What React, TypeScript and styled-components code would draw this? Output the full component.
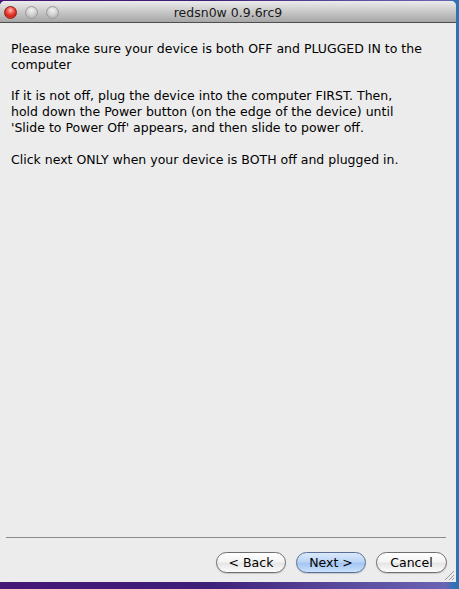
import React from "react";
import styled, { createGlobalStyle } from "styled-components";

const GlobalStyle = createGlobalStyle`
  html, body {
    margin: 0;
    padding: 0;
  }
  body {
    width: 459px;
    height: 589px;
    overflow: hidden;
    font-family: "DejaVu Sans", "Liberation Sans", sans-serif;
  }
`;

const paragraphs: string[][] = [
  ["Please make sure your device is both OFF and PLUGGED IN to the", "computer"],
  [
    "If it is not off, plug the device into the computer FIRST. Then,",
    "hold down the Power button (on the edge of the device) until",
    "'Slide to Power Off' appears, and then slide to power off.",
  ],
  ["Click next ONLY when your device is BOTH off and plugged in."],
];

const Desktop = styled.div`
  width: 459px;
  height: 589px;
  box-sizing: border-box;
  padding-top: 1px;
  background:
    linear-gradient(90deg, rgba(0, 0, 0, 0) 97%, #2f73b4 99%),
    linear-gradient(90deg, #451777 0%, #3d1f78 45%, #5a4a9e 75%, #6d66b6 100%);
  background-color: #1e2450;
`;

const Window = styled.div`
  position: relative;
  width: 456px;
  height: 581px;
  display: flex;
  flex-direction: column;
  background: #ececec;
  border-radius: 5px 5px 0 0;
  overflow: hidden;
`;

const TitleBar = styled.div`
  height: 21px;
  display: grid;
  grid-template-columns: 1fr auto 1fr;
  align-items: center;
  background: linear-gradient(#ebebeb, #c9c9c9 50%, #a6a6a6);
  border-bottom: 1px solid #4f4f4f;
`;

const Lights = styled.div`
  display: flex;
  gap: 8px;
  padding-left: 4px;
  padding-top: 1px;
`;

const Light = styled.span<{ $red?: boolean }>`
  width: 13px;
  height: 13px;
  box-sizing: border-box;
  border-radius: 50%;
  border: 1px solid ${(p) => (p.$red ? "#8c2118" : "#999999")};
  background: ${(p) =>
    p.$red
      ? "radial-gradient(circle at 50% 30%, #ffc4bc 0%, #f5554a 35%, #d0231a 65%, #f06a5c 100%)"
      : "radial-gradient(circle at 50% 30%, #f2f2f2 0%, #d4d4d4 45%, #b9b9b9 75%, #dddddd 100%)"};
`;

const Title = styled.div`
  font-size: 12.5px;
  color: #1a1a1a;
  padding-top: 1px;
`;

const Body = styled.div`
  flex: 1;
  padding: 18px 8px 0 11px;
  font-size: 12.5px;
  line-height: 15.8px;
  color: #000;
`;

const Para = styled.p`
  margin: 0 0 15.8px;
`;

const Separator = styled.div`
  height: 1px;
  margin: 0 10px 0 6px;
  background: #8a8a8a;
`;

const Footer = styled.div`
  display: flex;
  justify-content: flex-end;
  gap: 10px;
  padding: 14px 9px 9px;
`;

const Button = styled.button<{ $primary?: boolean; $w: number }>`
  width: ${(p) => p.$w}px;
  height: 21px;
  padding: 0;
  border-radius: 11px;
  font-family: "DejaVu Sans", "Liberation Sans", sans-serif;
  font-size: 12.5px;
  color: #000;
  border: 1px solid ${(p) => (p.$primary ? "#5a6f96" : "#6e6e6e")};
  background: ${(p) =>
    p.$primary
      ? "linear-gradient(#dbe9fb, #bcd6f6 45%, #a3c6f2 55%, #c9e1fb)"
      : "linear-gradient(#ffffff, #f4f4f4 45%, #e6e6e6 55%, #fbfbfb)"};
  box-shadow: 0 1px 1px rgba(0, 0, 0, 0.15);
`;

const Grip = styled.svg`
  position: absolute;
  right: 1px;
  bottom: 1px;
`;

export default function App() {
  return (
    <>
      <GlobalStyle />
      <Desktop>
        <Window>
          <TitleBar>
            <Lights>
              <Light $red />
              <Light />
              <Light />
            </Lights>
            <Title>redsn0w 0.9.6rc9</Title>
            <span />
          </TitleBar>
          <Body>
            {paragraphs.map((lines, i) => (
              <Para key={i}>
                {lines.map((l, j) => (
                  <React.Fragment key={j}>
                    {l}
                    {j < lines.length - 1 && <br />}
                  </React.Fragment>
                ))}
              </Para>
            ))}
          </Body>
          <Separator />
          <Footer>
            <Button $w={70}>&lt; Back</Button>
            <Button $w={70} $primary>
              Next &gt;
            </Button>
            <Button $w={71}>Cancel</Button>
          </Footer>
          <Grip width="11" height="11" viewBox="0 0 11 11">
            <path d="M10 1 L1 10 M10 5 L5 10 M10 8 L8 10" stroke="#9a9a9a" strokeWidth="1" />
          </Grip>
        </Window>
      </Desktop>
    </>
  );
}
